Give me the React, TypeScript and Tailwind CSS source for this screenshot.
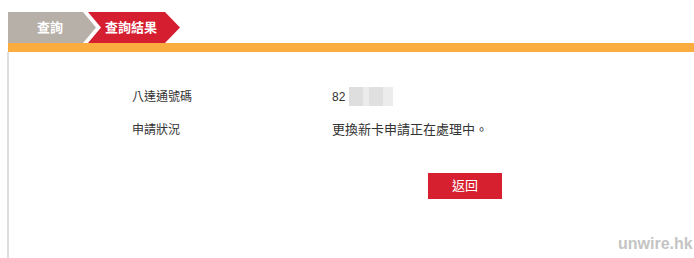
import React from 'react';

// Octopus card status lookup result page
const rows = [
  { label: '八達通號碼', value: 'number' },
  { label: '申請狀況', value: '更換新卡申請正在處理中。' },
];

const MaskedNumber = () => (
  <div className="flex items-center text-[12px]">
    <span>82</span>
    <div className="ml-[4px] flex h-[19px] w-[44px]">
      <div className="w-[14px] bg-[#dedede]" />
      <div className="w-[6px] bg-[#ebebeb]" />
      <div className="w-[14px] bg-[#e0e0e0]" />
      <div className="w-[10px] bg-[#ececec]" />
    </div>
  </div>
);

export default function App() {
  return (
    <div
      className="relative h-[258px] w-[694px] overflow-hidden bg-white text-[#333]"
      style={{ fontFamily: '"Liberation Sans", "Noto Sans CJK TC", sans-serif' }}
    >
      <div className="pl-[8px] pt-[12px]">
        {/* step tabs */}
        <div className="flex h-[31px]">
          <div className="flex w-[88px] items-center bg-[#b7b0a8] pl-[29px] text-[13px] font-bold text-white [clip-path:polygon(0_0,75px_0,88px_50%,75px_100%,0_100%)]">
            查詢
          </div>
          <div className="-ml-[8px] flex w-[92px] items-center bg-[#d51f30] pl-[17px] text-[13px] font-bold text-white [clip-path:polygon(0_0,77px_0,92px_50%,77px_100%,0_100%,13px_50%)]">
            查詢結果
          </div>
        </div>
        <div className="h-[9px] bg-[#fbac3f]" />

        {/* result body */}
        <div className="-ml-[1px] h-[206px] border-l-2 border-[#dedede] pt-[28px]">
          {rows.map((row) => (
            <div key={row.label} className="flex h-[33px] items-center pl-[123px] text-[12px]">
              <div className="w-[200px]">{row.label}</div>
              <div className="text-[13px]">{row.value === 'number' ? <MaskedNumber /> : row.value}</div>
            </div>
          ))}
          <button className="ml-[419px] mt-[27px] flex h-[26px] w-[74px] items-center justify-center bg-[#d7202f] text-[13px] text-white">
            返回
          </button>
        </div>
      </div>

      {/* watermark */}
      <div className="absolute left-[618px] top-[234px] text-[16px] font-bold leading-[20px] text-[#c4c4c4]">
        unwire.hk
      </div>
    </div>
  );
}
